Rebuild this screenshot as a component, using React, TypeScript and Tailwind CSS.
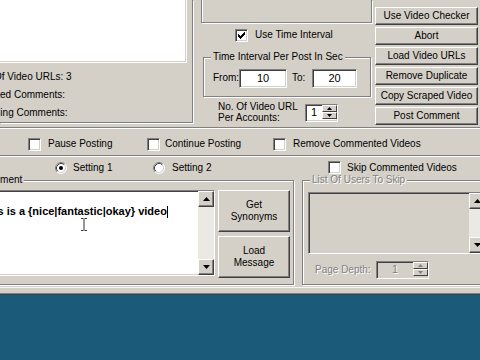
import React from "react";

const etched = "border border-[#808080] shadow-[inset_1px_1px_0_#fff,1px_1px_0_#fff]";
const sunken =
  "border border-t-[#808080] border-l-[#808080] border-b-white border-r-white shadow-[inset_1px_1px_0_#404040,inset_-1px_-1px_0_#d4d0c8]";
const raised =
  "bg-[#d4d0c8] border border-t-white border-l-white border-b-[#404040] border-r-[#404040] shadow-[inset_-1px_-1px_0_#808080]";
const smallRaised =
  "bg-[#d4d0c8] border border-t-white border-l-white border-b-[#404040] border-r-[#404040]";
const disabledText = "text-[#808080] [text-shadow:1px_1px_0_#fff]";

const Check = ({ checked }: { checked?: boolean }) => (
  <span className={`w-[13px] h-[13px] shrink-0 bg-white flex items-center justify-center ${sunken}`}>
    {checked && (
      <svg width="7" height="7" viewBox="0 0 7 7">
        <path d="M0 2h1v1h1v1h1V3h1V2h1V1h1V0h1v3H6v1H5v1H4v1H3v1H2V6H1V5H0z" fill="#000" />
      </svg>
    )}
  </span>
);

const Radio = ({ checked }: { checked?: boolean }) => (
  <svg width="12" height="12" viewBox="0 0 12 12" className="shrink-0">
    <circle cx="6" cy="6" r="5" fill="#fff" />
    <path d="M2.11 9.89A5.5 5.5 0 0 1 9.89 2.11" stroke="#808080" fill="none" />
    <path d="M9.89 2.11A5.5 5.5 0 0 1 2.11 9.89" stroke="#fff" fill="none" />
    <path d="M2.82 9.18A4.5 4.5 0 0 1 9.18 2.82" stroke="#404040" fill="none" />
    <path d="M9.18 2.82A4.5 4.5 0 0 1 2.82 9.18" stroke="#d4d0c8" fill="none" />
    {checked && <circle cx="6" cy="6" r="2" fill="#000" />}
  </svg>
);

const Arrow = ({ up, small, color = "#000" }: { up?: boolean; small?: boolean; color?: string }) =>
  small ? (
    <svg width="5" height="3" viewBox="0 0 5 3">
      <path d={up ? "M0 3L2.5 0L5 3Z" : "M0 0H5L2.5 3Z"} fill={color} />
    </svg>
  ) : (
    <svg width="7" height="4" viewBox="0 0 7 4">
      <path d={up ? "M0 4L3.5 0L7 4Z" : "M0 0H7L3.5 4Z"} fill={color} />
    </svg>
  );

const VScroll = () => (
  <div className="w-[16px] h-full flex flex-col shrink-0">
    <div className={`h-[16px] flex items-center justify-center ${raised}`}>
      <Arrow up />
    </div>
    <div className="flex-1 bg-[#ebe9e4]" />
    <div className={`h-[16px] flex items-center justify-center ${raised}`}>
      <Arrow />
    </div>
  </div>
);

const Spin = ({ value, disabled, className }: { value: string; disabled?: boolean; className: string }) => (
  <div className={`flex h-[18px] shrink-0 ${sunken} ${disabled ? "bg-[#d4d0c8]" : "bg-white"} ${className}`}>
    <span className={`flex-1 text-center text-[11px] leading-[14px] ${disabled ? disabledText : ""}`}>{value}</span>
    <div className="w-[15px] flex flex-col">
      <div className={`h-[7px] flex items-center justify-center ${smallRaised}`}>
        <Arrow up small color={disabled ? "#808080" : "#000"} />
      </div>
      <div className={`h-[7px] flex items-center justify-center ${smallRaised}`}>
        <Arrow small color={disabled ? "#808080" : "#000"} />
      </div>
    </div>
  </div>
);

const Btn = ({ children, className }: { children: React.ReactNode; className: string }) => (
  <button className={`${raised} flex flex-col items-center justify-center text-center leading-[12px] ${className}`}>
    {children}
  </button>
);

const rightButtons = [
  "Use Video Checker",
  "Abort",
  "Load Video URLs",
  "Remove Duplicate",
  "Copy Scraped Video",
  "Post Comment",
];

export default function App() {
  return (
    <div className="w-[480px] h-[360px] overflow-hidden bg-[#d4d0c8] flex flex-col text-[10px] leading-none text-black font-['Liberation_Sans',Arial,sans-serif] select-none">
      {/* upper part of the dialog */}
      <div className="flex h-[127px] shrink-0">
        <div className="w-[193px] h-[123px] shrink-0 flex flex-col border-r border-b border-[#808080] shadow-[1px_1px_0_#fff]">
          <div className="w-[187px] h-[64px] bg-white border-r border-b border-white shadow-[inset_-1px_-1px_0_#d4d0c8]" />
          <div className="mt-[5px] flex flex-col whitespace-nowrap">
            <div className="h-[18px] leading-[18px] ml-[-6px]">Of Video URLs: 3</div>
            <div className="h-[18px] leading-[18px] ml-[-20px]">Posted Comments:</div>
            <div className="h-[18px] leading-[18px] ml-[-23px]">Pending Comments:</div>
          </div>
        </div>

        <div className="ml-[8px] w-[171px] shrink-0 flex flex-col">
          <div className="h-[23px] border-x border-b border-[#808080] shadow-[inset_1px_0_0_#fff,1px_1px_0_#fff]" />
          <label className="mt-[4px] h-[16px] flex items-center pl-[34px] gap-[7px]">
            <Check checked />
            <span>Use Time Interval</span>
          </label>
          <div className={`relative mt-[14px] ml-[2px] w-[168px] h-[40px] flex items-center pt-[2px] pl-[9px] ${etched}`}>
            <span className="absolute left-[7px] top-[-6px] px-[2px] bg-[#d4d0c8] whitespace-nowrap">
              Time Interval Per Post In Sec
            </span>
            <span className="w-[26px]">From:</span>
            <div className={`w-[48px] h-[19px] bg-white flex items-center justify-center text-[11px] ${sunken}`}>10</div>
            <span className="ml-[5px] w-[20px]">To:</span>
            <div className={`w-[45px] h-[19px] bg-white flex items-center justify-center text-[11px] ${sunken}`}>20</div>
          </div>
          <div className="mt-[4px] flex pl-[17px]">
            <div className="w-[87px] leading-[11px] whitespace-nowrap">
              No. Of Video URL
              <br />
              Per Accounts:
            </div>
            <Spin value="1" className="mt-[3px] w-[33px]" />
          </div>
        </div>

        <div className="ml-[3px] w-[103px] shrink-0 flex flex-col pt-[7px] gap-[2px]">
          {rightButtons.map((b) => (
            <Btn key={b} className="h-[18px] whitespace-nowrap">
              {b}
            </Btn>
          ))}
        </div>
      </div>

      <div className="h-[2px] shrink-0 border-t border-t-[#808080] border-b border-b-white" />

      <div className="h-[26px] shrink-0 pt-[4px] flex items-center pl-[28px] whitespace-nowrap">
        <label className="w-[119px] flex items-center gap-[7px]">
          <Check />
          Pause Posting
        </label>
        <label className="w-[126px] flex items-center gap-[5px]">
          <Check />
          Continue Posting
        </label>
        <label className="flex items-center gap-[7px]">
          <Check />
          Remove Commented Videos
        </label>
      </div>

      <div className="h-[2px] shrink-0 border-t border-t-[#808080] border-b border-b-white" />

      <div className="h-[21px] shrink-0 flex items-center pl-[55px] whitespace-nowrap">
        <label className="w-[98px] flex items-center gap-[6px]">
          <Radio checked />
          Setting 1
        </label>
        <label className="w-[175px] flex items-center gap-[7px]">
          <Radio />
          Setting 2
        </label>
        <label className="flex items-center gap-[6px]">
          <Check />
          Skip Commented Videos
        </label>
      </div>

      {/* comment + users to skip */}
      <div className="mt-[2px] h-[105px] shrink-0 flex">
        <div className={`relative ml-[-4px] w-[298px] h-full shrink-0 flex items-start pt-[9px] ${etched}`}>
          <span className="absolute left-[-20px] top-[-6px] px-[2px] bg-[#d4d0c8]">Comment</span>
          <div className={`relative w-[218px] h-[86px] shrink-0 bg-white flex ${sunken}`}>
            <div className="flex-1 overflow-hidden">
              <div className="mt-[14px] ml-[-17px] font-bold text-[11px] leading-[13px] whitespace-nowrap flex items-center">
                {"This is a {nice|fantastic|okay} video"}
                <span className="inline-block w-px h-[12px] bg-black" />
              </div>
            </div>
            <VScroll />
            <svg className="absolute left-[82px] top-[27px]" width="8" height="13" viewBox="0 0 8 13">
              <path d="M1 0.5H3.5M4.5 0.5H7M4 1V12M1 12.5H3.5M4.5 12.5H7" stroke="#303030" fill="none" />
            </svg>
          </div>
          <div className="ml-[3px] w-[72px] flex flex-col gap-[4px]">
            <Btn className="h-[42px]">
              <span>Get</span>
              <span>Synonyms</span>
            </Btn>
            <Btn className="h-[42px]">
              <span>Load</span>
              <span>Message</span>
            </Btn>
          </div>
        </div>

        <div className={`relative ml-[8px] w-[190px] h-full shrink-0 flex flex-col pt-[11px] pl-[5px] ${etched}`}>
          <span className={`absolute left-[7px] top-[-6px] px-[2px] bg-[#d4d0c8] whitespace-nowrap ${disabledText}`}>
            List Of Users To Skip
          </span>
          <div className={`w-[178px] h-[62px] shrink-0 bg-[#d4d0c8] flex justify-end ${sunken}`}>
            <VScroll />
          </div>
          <div className="mt-[7px] h-[18px] flex items-center pl-[7px]">
            <span className={`w-[61px] ${disabledText}`}>Page Depth:</span>
            <Spin value="1" disabled className="w-[53px]" />
          </div>
        </div>
      </div>

      {/* window frame bottom */}
      <div className="h-[2px] shrink-0" />
      <div className="h-px shrink-0 bg-[#f4f3f0]" />
      <div className="h-[5px] shrink-0" />
      <div className="h-px shrink-0 bg-[#808080]" />
      <div className="h-px shrink-0 bg-[#404040]" />
      <div className="flex-1 bg-[#1b5a78]" />
    </div>
  );
}
